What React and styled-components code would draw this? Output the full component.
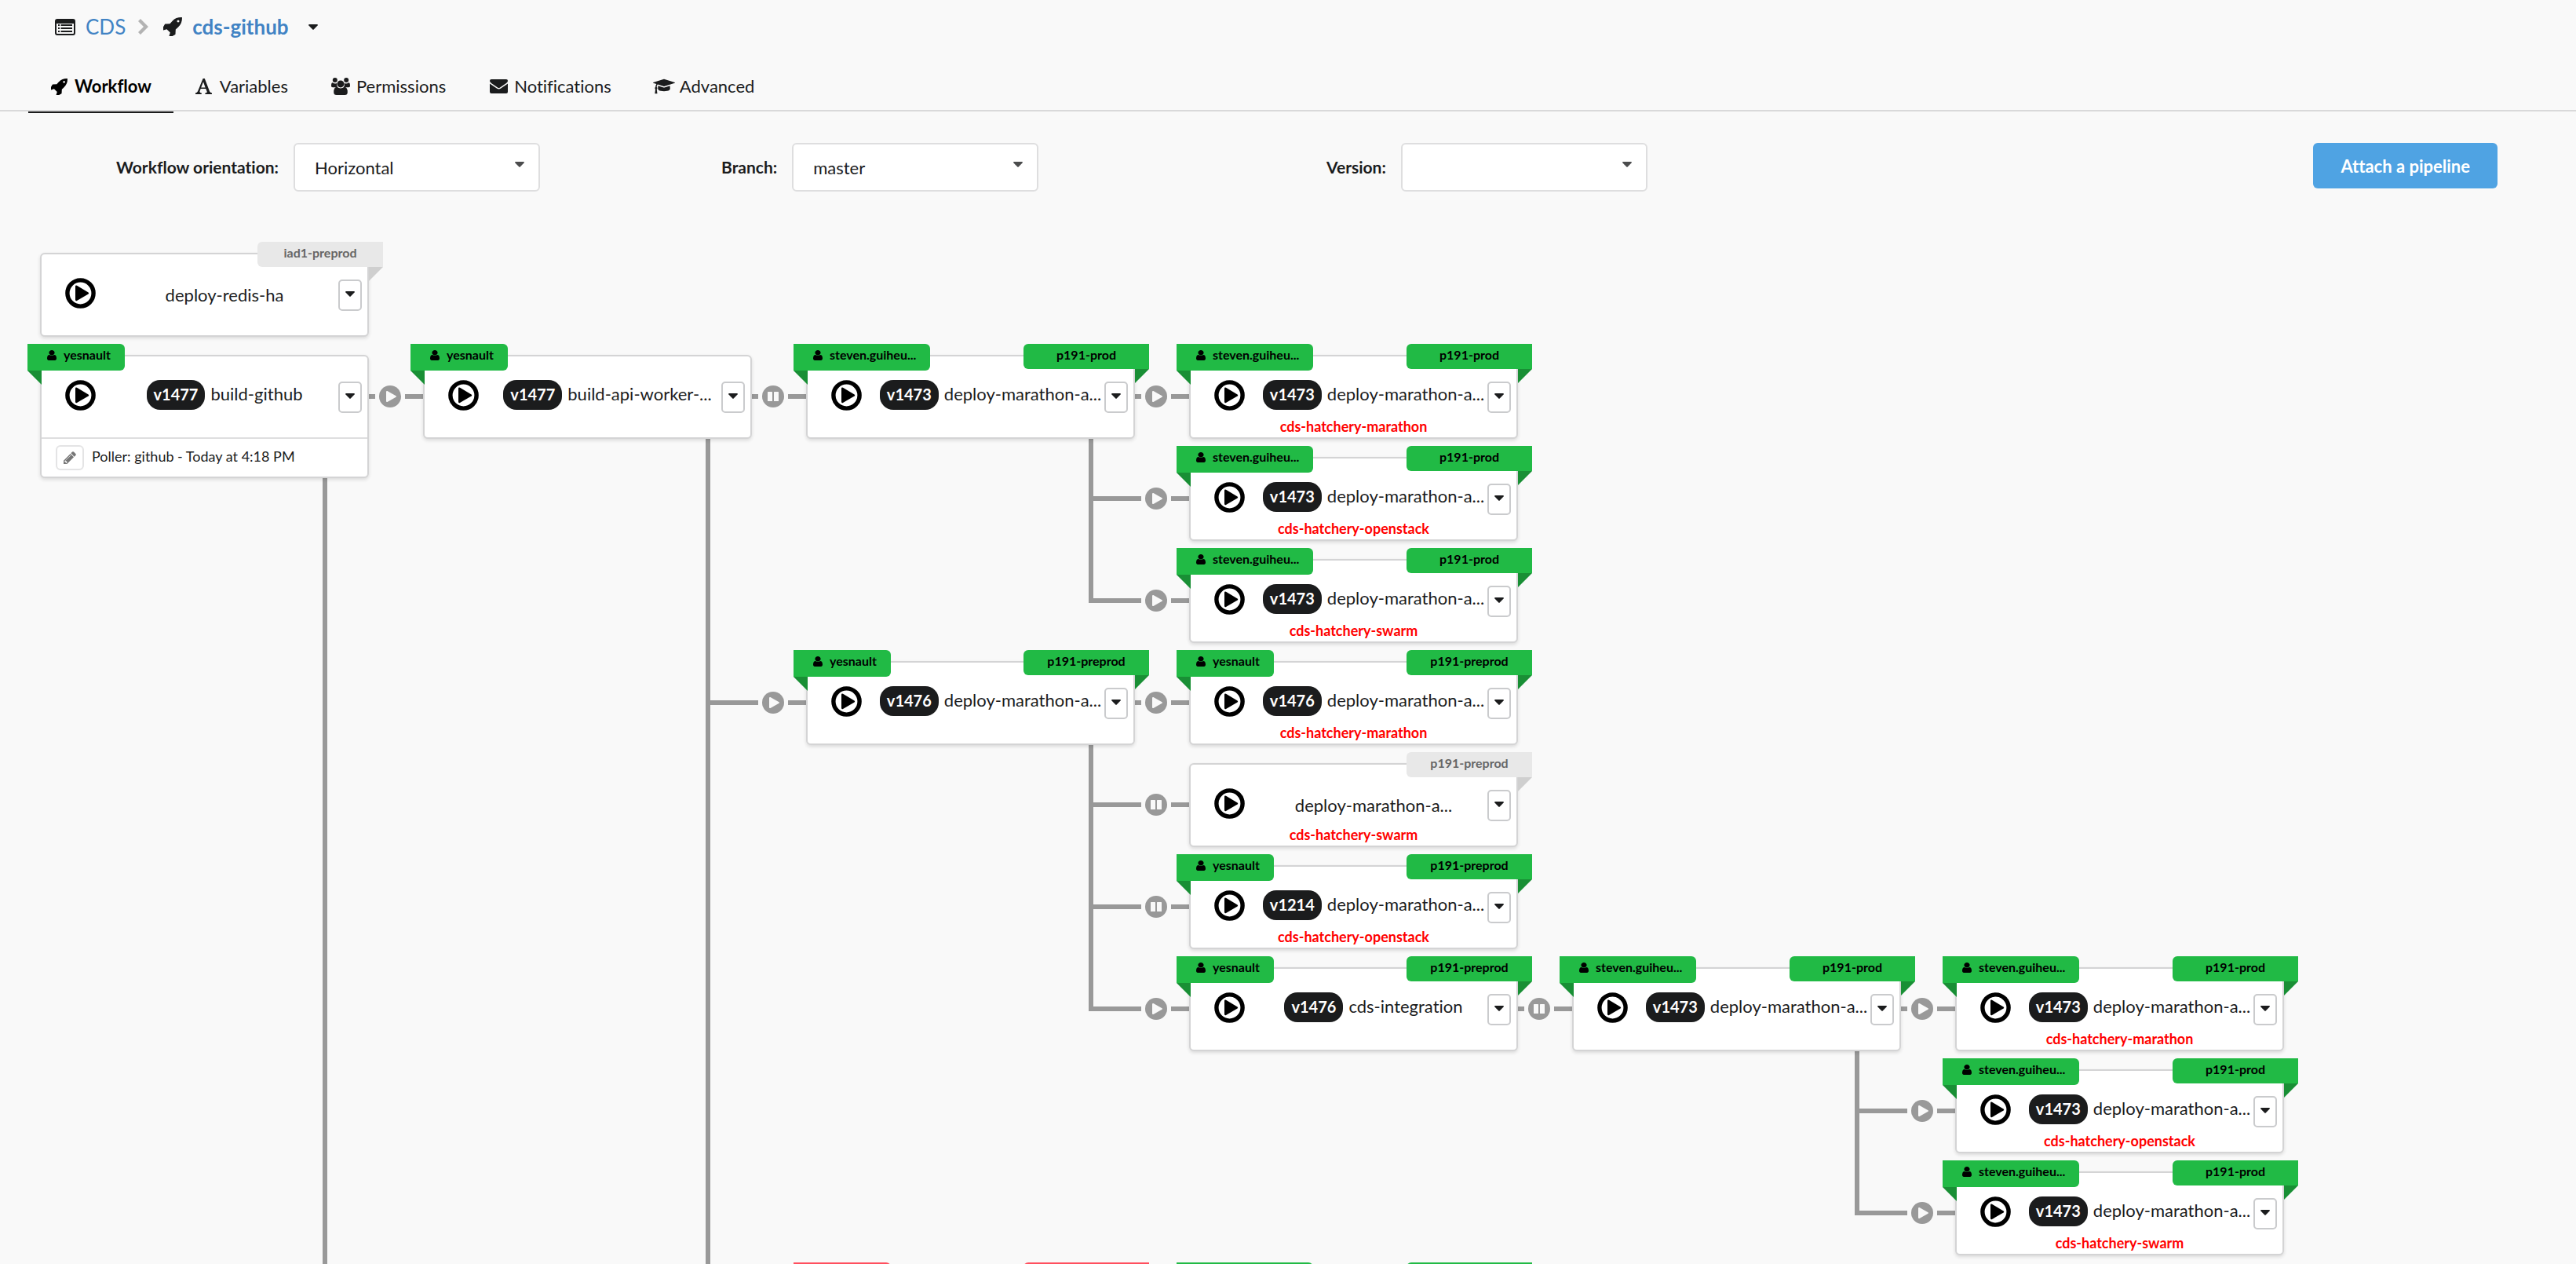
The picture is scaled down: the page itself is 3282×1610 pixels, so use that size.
import React from "react";
import styled, { createGlobalStyle, css } from "styled-components";

const palette = {
  page: "#f9f9f9",
  text: "#1b1c1d",
  link: "#4183c4",
  line: "#999999",
  border: "#d4d4d5",
  primary: "#4fa3e3",
};

const tones = {
  success: { back: "#21ba45", fold: "#198f35", text: "#000000" },
  fail: { back: "#ff4f5e", fold: "#d0021b", text: "#000000" },
  idle: { back: "#e8e8e8", fold: "#cfcfcf", text: "#666666" },
};

const GlobalStyle = createGlobalStyle`
  *, *::before, *::after { box-sizing: border-box; }
  body {
    margin: 0;
    background: ${palette.page};
    color: ${palette.text};
    font-family: Lato, "Open Sans", sans-serif;
    font-size: 22px;
    font-variant-ligatures: none;
  }
  button, select { font: inherit; color: inherit; margin: 0; padding: 0; cursor: pointer; }
`;

/* ---------- icons ---------- */

const Glyph = styled.svg`
  display: block;
  flex: none;
  width: ${(p) => p.$w}px;
  height: ${(p) => p.$h}px;
  fill: currentColor;
`;

const RocketIcon = ({ size }) => (
  <Glyph $w={size} $h={size} viewBox="128 128 1536 1536" aria-hidden="true">
    <path d="M1440 448q0-40-28-68t-68-28-68 28-28 68 28 68 68 28 68-28 28-68zm224-288q0 249-75.5 430.5t-253.5 360.5q-81 80-195 176l-20 379q-2 16-16 26l-384 224q-7 4-16 4-12 0-23-9l-64-64q-13-14-8-32l85-276-281-281-276 85q-3 1-9 1-14 0-23-9l-64-64q-17-19-5-39l224-384q10-14 26-16l379-20q96-114 176-195 188-187 358-258t431-71q14 0 24 9.5t10 22.5z" />
  </Glyph>
);

const ListIcon = () => (
  <Glyph $w={26} $h={21} viewBox="0 0 26 21" aria-hidden="true">
    <path fillRule="evenodd" d="M3 0h20a3 3 0 0 1 3 3v15a3 3 0 0 1-3 3H3a3 3 0 0 1-3-3V3a3 3 0 0 1 3-3zM2 6v12a1 1 0 0 0 1 1h20a1 1 0 0 0 1-1V6z" />
    <path d="M4 7h2v2H4zM7.500 7H22v2H7.500zM4 11h2v2H4zM7.500 11H22v2H7.500zM4 15h2v2H4zM7.500 15H22v2H7.500z" />
  </Glyph>
);

const ChevronIcon = () => (
  <Glyph $w={13} $h={20} viewBox="0 0 13 20" aria-hidden="true">
    <path d="M3 0l10 10L3 20l-3-3 7-7-7-7z" />
  </Glyph>
);

const CaretIcon = () => (
  <Glyph $w={12} $h={7} viewBox="0 0 12 7" aria-hidden="true">
    <path d="M1 0h10q1.4.4.6 1.5L6.7 6.6q-.7.6-1.4 0L.4 1.5Q-.4.4 1 0z" />
  </Glyph>
);

const FontIcon = () => (
  <Glyph $w={21} $h={20} viewBox="0 0 21 20" aria-hidden="true">
    <path fillRule="evenodd" d="M9.6 0h2.2l6.3 16.6q.7 1.7 2.9 1.9V20h-8.6v-1.5q2.8-.1 2.2-1.9l-1.3-3.7H6.7l-1.1 3.1q-.7 2.2 2.2 2.5V20H0v-1.5q2.2-.3 3-2.3zM10 4.2l-2.8 7.2h5.4z" />
  </Glyph>
);

const UsersIcon = () => (
  <Glyph $w={24} $h={22} viewBox="0 0 24 22" aria-hidden="true">
    <circle cx="4.800" cy="3" r="3" />
    <circle cx="19.200" cy="3" r="3" />
    <path d="M0 10.4q0-4.2 1.7-4.2 3 2 5.6.8-.9 3.400 1 5.300H2.400Q0 12.300 0 10.400zM24 10.400q0-4.200-1.700-4.200-3 2-5.600.8.9 3.400-1 5.300h5.900q2.400 0 2.400-1.900z" />
    <circle cx="12" cy="7.900" r="4.500" />
    <path d="M3.200 18.500q0-6.700 4.200-6.700 4.600 3.400 9.200 0 4.200 0 4.200 6.700 0 3.500-3.500 3.500H6.700q-3.500 0-3.500-3.500z" />
  </Glyph>
);

const MailIcon = () => (
  <Glyph $w={23} $h={18} viewBox="0 0 23 18" aria-hidden="true">
    <path d="M2 0h19q2 0 2 2 0 1.500-2 3l-8 5.600q-1.500 1-3 0L2 5Q0 3.500 0 2 0 0 2 0z" />
    <path d="M0 5.400l9.200 6.400q2.300 1.500 4.600 0L23 5.400V16q0 2-2 2H2q-2 0-2-2z" />
  </Glyph>
);

const GraduationIcon = () => (
  <Glyph $w={28} $h={22} viewBox="0 0 2304 1792" aria-hidden="true">
    <path d="M1774 836l18 316q4 69-82 128t-235 93.500-323 34.500-323-34.500-235-93.500-82-128l18-316 574 181q22 7 48 7t48-7zm530-324q0 23-22 31l-1120 352q-4 1-10 1t-10-1l-652-206q-43 34-71 111.500t-34 178.500q63 36 63 109 0 69-58 107l58 433q2 14-8 25-9 11-24 11h-192q-15 0-24-11-10-11-8-25l58-433q-58-38-58-107 0-73 65-111 11-207 98-330l-333-104q-22-8-22-31t22-31l1120-352q4-1 10-1t10 1l1120 352q22 8 22 31z" />
  </Glyph>
);

const UserIcon = () => (
  <Glyph $w={12} $h={13} viewBox="256 128 1280 1536" preserveAspectRatio="none" aria-hidden="true">
    <path d="M1536 1399q0 109-62.500 187t-150.500 78h-854q-88 0-150.500-78t-62.500-187q0-85 8.500-160.500t31.500-152 58.500-131 94-89 134.500-34.500q131 128 313 128t313-128q76 0 134.500 34.500t94 89 58.500 131 31.500 152 8.500 160.500zm-256-887q0 159-112.500 271.500t-271.500 112.500-271.500-112.500-112.500-271.500 112.500-271.500 271.500-112.500 271.500 112.500 112.500 271.500z" />
  </Glyph>
);

const PencilIcon = () => (
  <Glyph $w={16} $h={16} viewBox="128 128 1536 1536" aria-hidden="true">
    <path d="M491 1536l91-91-235-235-91 91v107h128v128h107zm523-928q0-22-22-22-10 0-17 7l-542 542q-7 7-7 17 0 22 22 22 10 0 17-7l542-542q7-7 7-17zm-54-192l416 416-832 832h-416v-416zm683 96q0 53-37 90l-166 166-416-416 166-165q36-38 90-38 53 0 91 38l235 234q37 39 37 91z" />
  </Glyph>
);

const PlayIcon = () => (
  <Glyph $w={39} $h={39} viewBox="0 0 39 39" aria-hidden="true">
    <circle cx="19.500" cy="19.500" r="16.600" fill="none" stroke="currentColor" strokeWidth="5.400" />
    <path d="M15 9.800l14.600 8.600q1.200 1 0 2L15 29q-2 .7-2-1.200V11q0-1.900 2-1.200z" />
  </Glyph>
);

const TriggerIcon = ({ manual }) => (
  <Glyph $w={28} $h={28} viewBox="0 0 28 28" role="img" aria-label={manual ? "Manual" : "Automatic"}>
    <circle cx="14" cy="14" r="14" />
    {manual ? (
      <g fill={palette.page}>
        <rect x="7" y="8" width="6" height="12" rx="0.500" />
        <rect x="15" y="8" width="6" height="12" rx="0.500" />
      </g>
    ) : (
      <path fill={palette.page} d="M10.500 7l11 6.200q1 .8 0 1.600l-11 6.200q-1.500.4-1.500-1V8q0-1.400 1.500-1z" />
    )}
  </Glyph>
);

/* ---------- page header ---------- */

const Page = styled.div`
  display: flex;
  flex-direction: column;
  height: 100vh;
  overflow: hidden;
`;

const Breadcrumb = styled.nav`
  display: flex;
  flex: none;
  align-items: center;
  height: 68px;
  padding-left: 70px;
  font-size: 26px;
  line-height: 32px;
`;

const Crumb = styled.span`
  display: flex;
  align-items: center;
  gap: 13px;
`;

const CrumbLink = styled.a`
  color: ${palette.link};
  text-decoration: none;
  font-weight: ${(p) => (p.$current ? 700 : 400)};
`;

const Divider = styled.span`
  margin: 0 19px 0 16px;
  color: #b3b3b3;
`;

const CrumbMenu = styled.button`
  margin-left: 25px;
  border: 0;
  background: none;
`;

const Tabs = styled.nav`
  display: flex;
  flex: none;
  height: 74px;
  padding-left: 36px;
  border-bottom: 2px solid #d9d9da;
`;

const Tab = styled.a`
  display: flex;
  align-items: center;
  gap: 7px;
  height: 76px;
  padding: 10px 28px 0 26px;
  border-bottom: 2px solid ${(p) => (p.$active ? palette.text : "transparent")};
  color: ${(p) => (p.$active ? "#000000" : palette.text)};
  font-weight: ${(p) => (p.$active ? 700 : 400)};
  line-height: 28px;
  text-decoration: none;
`;

const TabIcon = styled.span`
  display: flex;
  justify-content: center;
  width: 26px;
`;

/* ---------- filters ---------- */

const Filters = styled.form`
  display: grid;
  flex: none;
  grid-template-columns: repeat(4, 1fr);
  padding: 40px 100px 0 98px;
`;

const Field = styled.div`
  display: flex;
  align-items: center;
  gap: 19px;
  height: 62px;
  padding-left: 50px;
`;

const FieldLabel = styled.label`
  flex: none;
  padding-bottom: 2px;
  font-size: 21px;
  font-weight: 700;
`;

const SelectBox = styled.div`
  position: relative;
  width: 314px;
  height: 62px;
`;

const Select = styled.select`
  width: 100%;
  height: 100%;
  padding-left: 25px;
  appearance: none;
  border: 2px solid #dededf;
  border-radius: 6px;
  background: #ffffff;
`;

const SelectCaret = styled.span`
  position: absolute;
  top: 24px;
  right: 20px;
  color: #4b4c4d;
  pointer-events: none;
`;

const AttachButton = styled.button`
  justify-self: end;
  height: 58px;
  padding: 0 35px;
  border: 0;
  border-radius: 6px;
  background: ${palette.primary};
  color: #ffffff;
  font-weight: 700;
`;

/* ---------- workflow graph ---------- */

const Graph = styled.main`
  padding: 78px 0 0 51px;
`;

const NodeRow = styled.div`
  display: flex;
  align-items: flex-start;
`;

const Card = styled.article`
  position: relative;
  z-index: 1;
  flex: none;
  width: 419px;
  margin-bottom: 23px;
  border: 2px solid ${palette.border};
  border-radius: 6px;
  background: #ffffff;
  box-shadow: 0 2px 4px rgba(34, 36, 38, 0.14);
`;

const Ribbon = styled.div`
  position: absolute;
  top: -16px;
  display: flex;
  align-items: flex-start;
  background: ${(p) => p.$tone.back};
  color: ${(p) => p.$tone.text};
  font-size: 16px;
  font-weight: 700;
  line-height: 28px;
  white-space: nowrap;

  &::after {
    content: "";
    position: absolute;
    top: 100%;
    width: 18px;
    height: 18px;
    background: ${(p) => p.$tone.fold};
  }
`;

const UserRibbon = styled(Ribbon)`
  left: -18px;
  gap: 9px;
  height: 34px;
  min-width: 124px;
  ${(p) => p.$wide && css`min-width: 174px;`}
  padding: 0 18px 0 25px;
  border-radius: 0 6px 6px 0;

  &::after {
    left: 0;
    clip-path: polygon(0 0, 100% 0, 100% 100%);
  }
`;

const RibbonIcon = styled.span`
  display: flex;
  align-items: center;
  height: 28px;
`;

const EnvRibbon = styled(Ribbon)`
  right: -20px;
  justify-content: center;
  width: 160px;
  height: 32px;
  border-radius: 6px 0 0 6px;

  &::after {
    right: 0;
    clip-path: polygon(0 0, 100% 0, 0 100%);
  }
`;

const CardBody = styled.div`
  min-height: 103px;
  padding: 30px 7px 0 30px;
`;

const CardMain = styled.div`
  display: flex;
  align-items: flex-start;
  height: 44px;
`;

const PlayButton = styled.button`
  flex: none;
  border: 0;
  background: none;
  color: #000000;
`;

const Title = styled.div`
  display: flex;
  flex: 1;
  justify-content: center;
  gap: 7px;
  margin-left: 19px;
  line-height: ${(p) => (p.$plain ? 44 : 36)}px;
  white-space: nowrap;
`;

const Version = styled.span`
  height: 38px;
  padding: 0 9px;
  border-radius: 17px;
  background: ${palette.text};
  color: #ffffff;
  font-size: 20px;
  font-weight: 700;
`;

const MenuButton = styled.button`
  display: flex;
  align-items: center;
  justify-content: center;
  align-self: center;
  flex: none;
  width: 30px;
  height: 40px;
  padding-bottom: 4px;
  border: 2px solid #cacbcd;
  border-radius: 5px;
  background: #ffffff;
`;

const Target = styled.div`
  margin: 3px 0 0 -23px;
  color: #ff0000;
  font-size: 18px;
  font-weight: 700;
  line-height: 24px;
  text-align: center;
`;

const CardFooter = styled.footer`
  display: flex;
  gap: 10px;
  height: 50px;
  padding: 8px 18px;
  border-top: 2px solid #dededf;
  font-size: 18px;
  line-height: 28px;
`;

const EditButton = styled.button`
  display: flex;
  align-items: center;
  justify-content: center;
  width: 36px;
  height: 32px;
  border: 2px solid #e4e4e5;
  border-radius: 6px;
  background: #ffffff;
  color: #767676;
`;

const trunk = css`
  &::before {
    content: "";
    position: absolute;
    top: 0;
    left: -59px;
    width: 6px;
    height: ${(p) => (p.$last ? "56px" : "100%")};
    background: ${palette.line};
  }
`;

const Branch = styled.div`
  position: relative;
  display: flex;
  align-items: flex-start;
  ${(p) => !(p.$first && p.$last) && trunk}
`;

const Connector = styled.div`
  position: relative;
  display: flex;
  align-items: center;
  gap: 5px;
  width: 69px;
  height: 30px;
  margin-top: 38px;
  color: ${palette.line};
`;

const Wire = styled.span`
  flex: none;
  width: 8px;
  height: 6px;
  background: currentColor;
  ${(p) => p.$reach && css`
    width: 67px;
    margin-left: -59px;
  `}
  ${(p) => p.$tail && css`
    flex: 1;
  `}
`;

/* ---------- data ---------- */

const prod = (target, extra) => ({
  user: "steven.guiheu...",
  env: "p191-prod",
  version: "v1473",
  name: "deploy-marathon-a...",
  target,
  ...extra,
});

const preprod = (target, extra) => ({
  user: "yesnault",
  env: "p191-preprod",
  version: "v1476",
  name: "deploy-marathon-a...",
  target,
  ...extra,
});

const hatcheries = () => [
  prod("cds-hatchery-marathon"),
  prod("cds-hatchery-openstack"),
  prod("cds-hatchery-swarm"),
];

const workflow = [
  { name: "deploy-redis-ha", env: "iad1-preprod", idle: true },
  {
    name: "build-github",
    version: "v1477",
    user: "yesnault",
    poller: "Poller: github - Today at 4:18 PM",
    children: [
      {
        name: "build-api-worker-...",
        version: "v1477",
        user: "yesnault",
        children: [
          prod(null, { manual: true, children: hatcheries() }),
          preprod(null, {
            children: [
              preprod("cds-hatchery-marathon"),
              preprod("cds-hatchery-swarm", { manual: true, user: null, version: null, idle: true }),
              preprod("cds-hatchery-openstack", { manual: true, version: "v1214" }),
              preprod(null, {
                name: "cds-integration",
                children: [prod(null, { manual: true, children: hatcheries() })],
              }),
            ],
          }),
          { pending: true, failed: true, children: [{ pending: true, wide: true }] },
        ],
      },
      { pending: true },
    ],
  },
];

/* ---------- components ---------- */

function NodeCard({ node }) {
  const tone = node.idle ? tones.idle : node.failed ? tones.fail : tones.success;
  return (
    <Card>
      {(node.user || node.pending) && (
        <UserRibbon $tone={tone} $wide={node.wide}>
          {node.user && (
            <>
              <RibbonIcon><UserIcon /></RibbonIcon>
              {node.user}
            </>
          )}
        </UserRibbon>
      )}
      {(node.env || node.pending) && <EnvRibbon $tone={tone}>{node.env}</EnvRibbon>}
      <CardBody>
        {node.name && (
          <CardMain>
            <PlayButton type="button" aria-label="Run"><PlayIcon /></PlayButton>
            <Title $plain={!node.version}>
              {node.version && <Version>{node.version}</Version>}
              <span>{node.name}</span>
            </Title>
            <MenuButton type="button" aria-label="Menu"><CaretIcon /></MenuButton>
          </CardMain>
        )}
        {node.target && <Target>{node.target}</Target>}
      </CardBody>
      {node.poller && (
        <CardFooter>
          <EditButton type="button" aria-label="Edit"><PencilIcon /></EditButton>
          <span>{node.poller}</span>
        </CardFooter>
      )}
    </Card>
  );
}

function Node({ node }) {
  const children = node.children || [];
  return (
    <NodeRow>
      <NodeCard node={node} />
      {children.length > 0 && (
        <div>
          {children.map((child, i) => (
            <Branch key={i} $first={i === 0} $last={i === children.length - 1}>
              <Connector>
                <Wire $reach={i > 0} />
                <TriggerIcon manual={child.manual} />
                <Wire $tail />
              </Connector>
              <Node node={child} />
            </Branch>
          ))}
        </div>
      )}
    </NodeRow>
  );
}

function SelectField({ id, label, value }) {
  return (
    <Field>
      <FieldLabel htmlFor={id}>{label}</FieldLabel>
      <SelectBox>
        <Select id={id} defaultValue={value}>
          <option value={value}>{value}</option>
        </Select>
        <SelectCaret><CaretIcon /></SelectCaret>
      </SelectBox>
    </Field>
  );
}

const tabs = [
  { label: "Workflow", icon: <RocketIcon size={21} />, active: true },
  { label: "Variables", icon: <FontIcon /> },
  { label: "Permissions", icon: <UsersIcon /> },
  { label: "Notifications", icon: <MailIcon /> },
  { label: "Advanced", icon: <GraduationIcon /> },
];

export default function App() {
  return (
    <Page>
      <GlobalStyle />
      <Breadcrumb>
        <Crumb>
          <ListIcon />
          <CrumbLink href="#project">CDS</CrumbLink>
        </Crumb>
        <Divider><ChevronIcon /></Divider>
        <Crumb>
          <RocketIcon size={24} />
          <CrumbLink href="#workflow" $current>cds-github</CrumbLink>
        </Crumb>
        <CrumbMenu type="button" aria-label="Switch workflow"><CaretIcon /></CrumbMenu>
      </Breadcrumb>
      <Tabs>
        {tabs.map((tab) => (
          <Tab key={tab.label} href={"#" + tab.label.toLowerCase()} $active={tab.active}>
            <TabIcon>{tab.icon}</TabIcon>
            {tab.label}
          </Tab>
        ))}
      </Tabs>
      <Filters>
        <SelectField id="orientation" label="Workflow orientation:" value="Horizontal" />
        <SelectField id="branch" label="Branch:" value="master" />
        <SelectField id="version" label="Version:" value="" />
        <AttachButton type="button">Attach a pipeline</AttachButton>
      </Filters>
      <Graph>
        {workflow.map((node) => <Node key={node.name} node={node} />)}
      </Graph>
    </Page>
  );
}
